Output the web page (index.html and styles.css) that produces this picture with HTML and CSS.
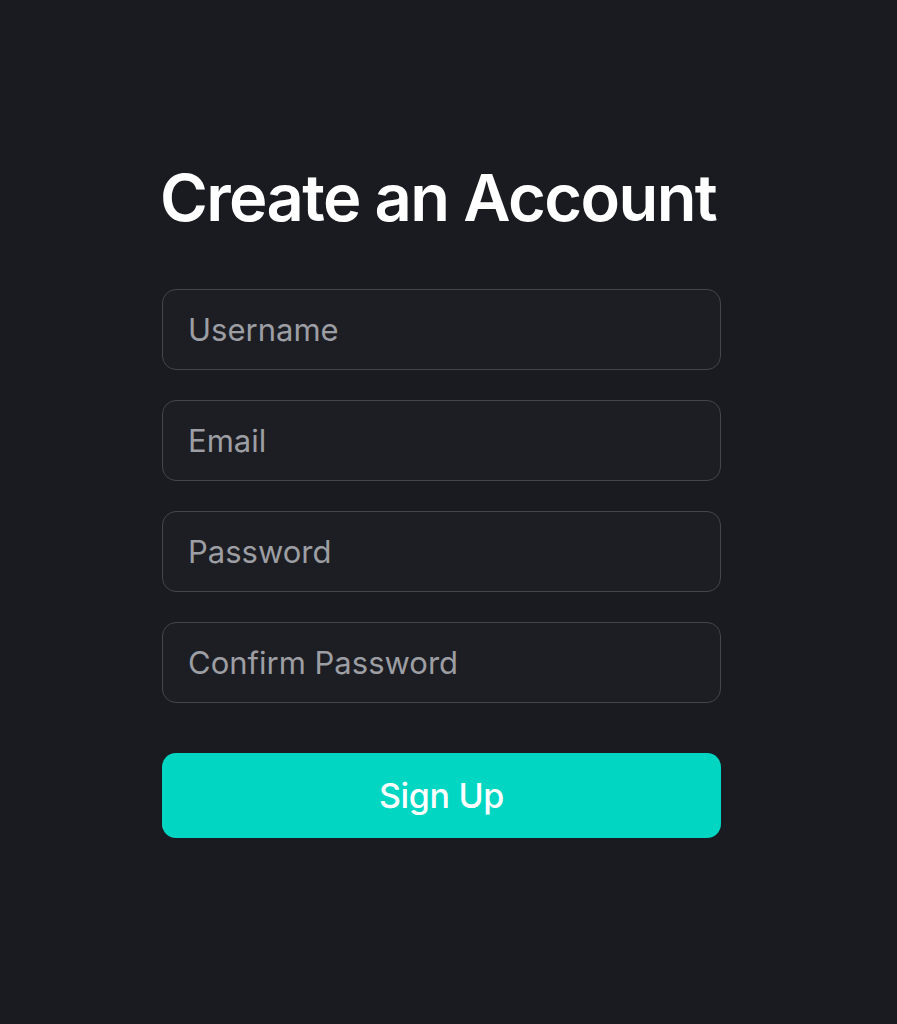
FILE: index.html
```html
<!DOCTYPE html>
<html lang="en">
<head>
<meta charset="utf-8">
<title>Create an Account</title>
<link rel="stylesheet" href="styles.css">
</head>
<body>
<main class="page">
  <form class="signup">
    <h1 class="title">Create an Account</h1>
    <div class="fields">
      <input class="field" type="text" placeholder="Username">
      <input class="field" type="email" placeholder="Email">
      <input class="field" type="password" placeholder="Password">
      <input class="field" type="password" placeholder="Confirm Password">
    </div>
    <button class="submit" type="button">Sign Up</button>
  </form>
</main>
</body>
</html>
```

FILE: styles.css
```css
html, body {
  margin: 0;
  padding: 0;
  background: #191b20;
}
body {
  font-family: Inter, "Noto Sans", sans-serif;
  color: #fff;
}
.page {
  min-height: 1024px;
  display: flex;
  justify-content: flex-start;
  padding-left: 162px;
}
.signup {
  width: 559px;
  padding-top: 160px;
  display: flex;
  flex-direction: column;
}
.title {
  margin: 0;
  font-size: 65px;
  font-weight: 600;
  letter-spacing: -1.6px;
  line-height: 76px;
  margin-left: -2px;
  white-space: nowrap;
}
.fields {
  margin-top: 53px;
  display: flex;
  flex-direction: column;
  gap: 30.5px;
}
.field {
  box-sizing: border-box;
  height: 80.5px;
  width: 100%;
  background: #1c1e23;
  border: 1px solid #43464d;
  border-radius: 14px;
  padding: 0 25px;
  font-family: Inter, "Noto Sans", sans-serif;
  font-size: 31px;
  color: #e0e0e0;
  outline: none;
}
.field::placeholder {
  color: #9c9ea3;
}
.submit {
  margin-top: 50px;
  height: 85px;
  width: 100%;
  border: none;
  border-radius: 14px;
  background: #00d6c2;
  color: #fff;
  font-family: Inter, "Noto Sans", sans-serif;
  font-size: 34px;
  font-weight: 500;
  letter-spacing: -0.3px;
  cursor: pointer;
}
```
